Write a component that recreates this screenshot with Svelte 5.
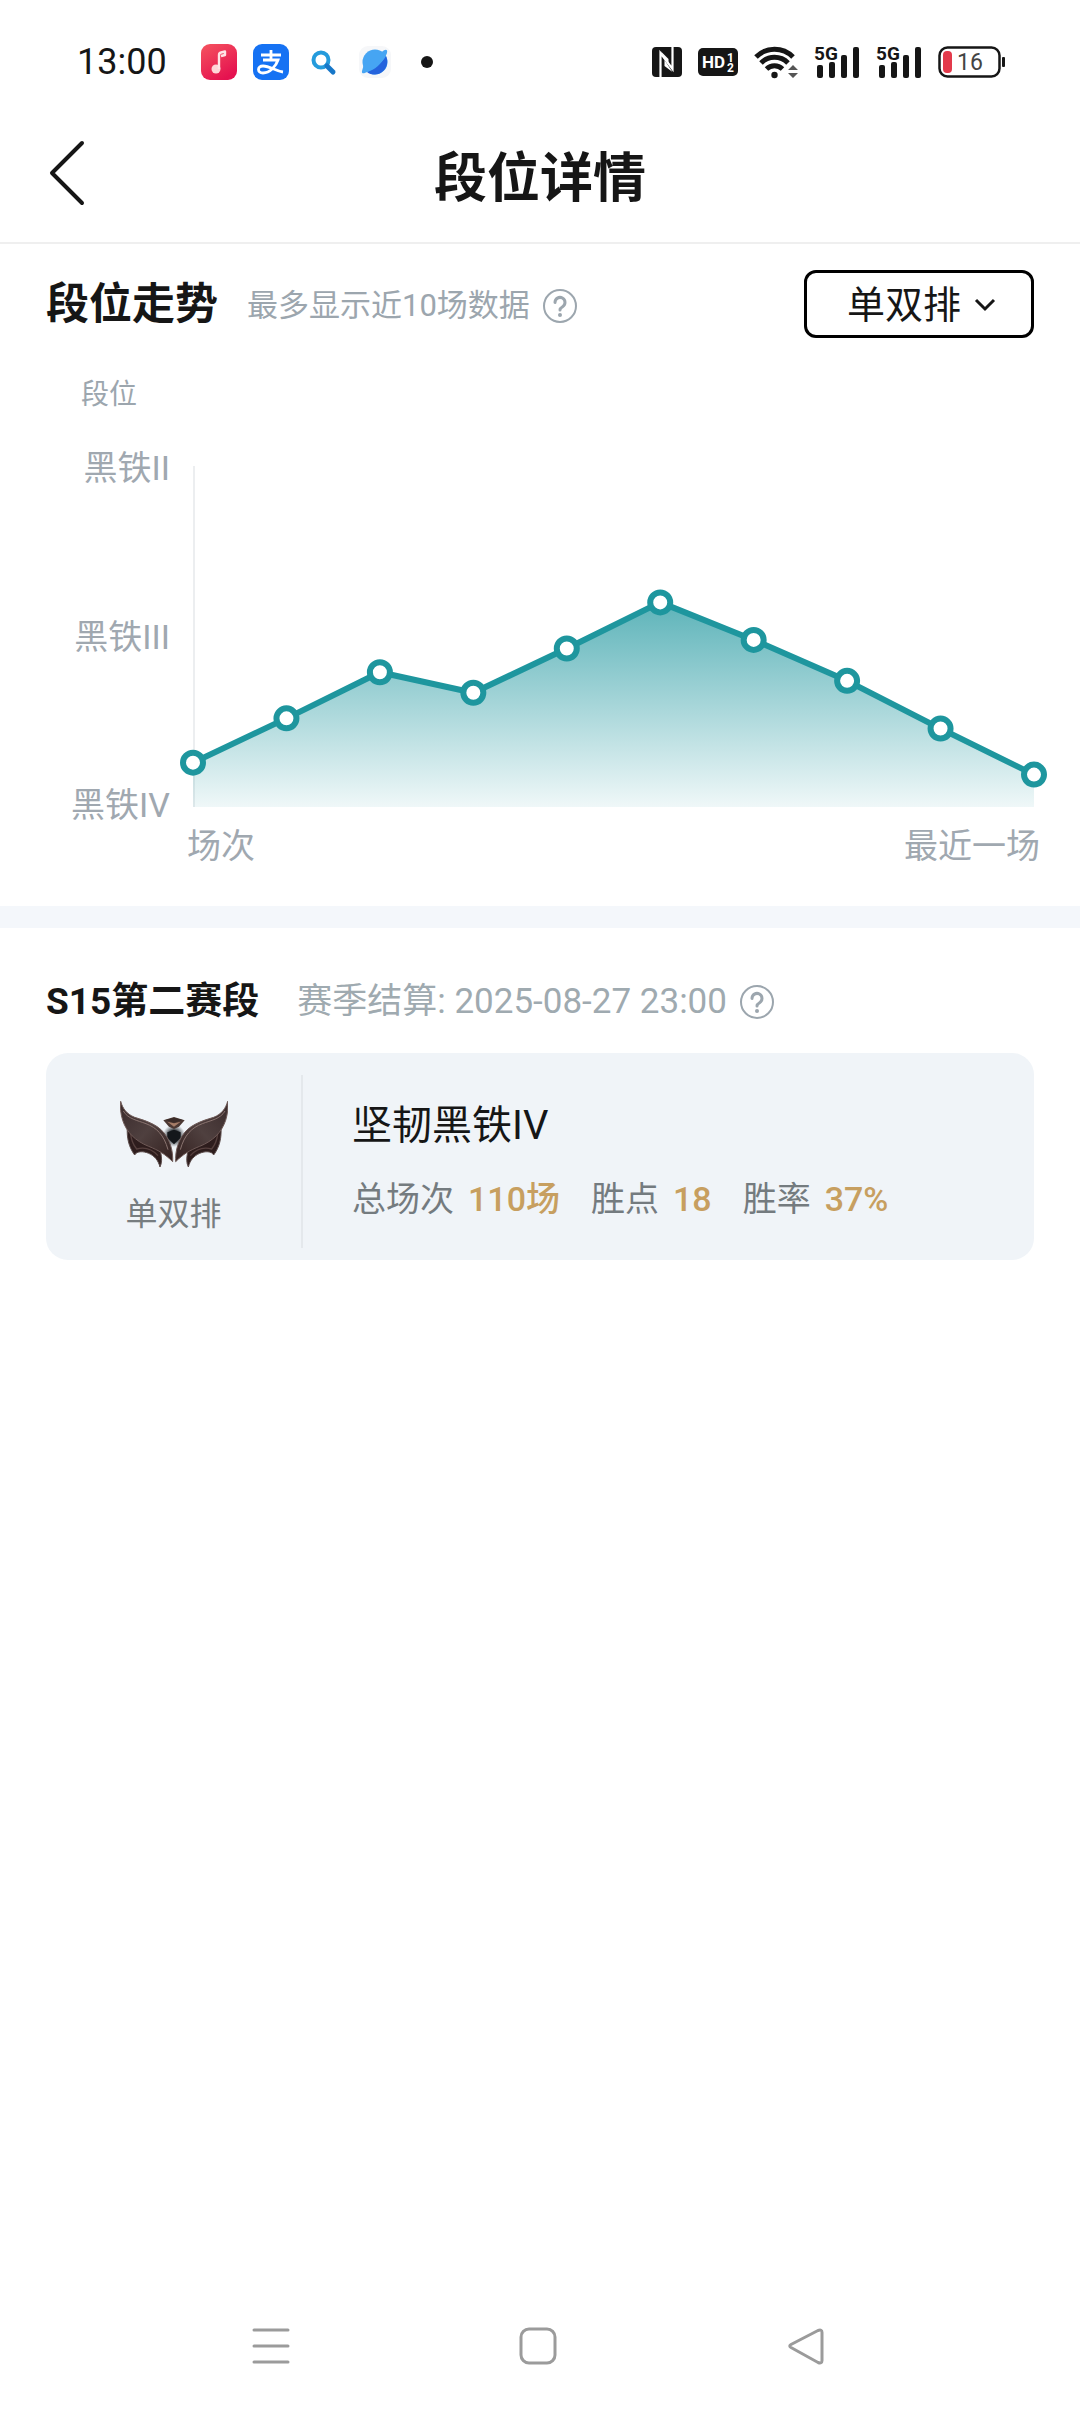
<!-- RankDetail -->

<script lang="ts">
  let mode = 'solo';

  const tiers = ['黑铁II', '黑铁III', '黑铁IV'];

  // 0 = 黑铁IV, 100 = 黑铁III, 200 = 黑铁II
  const matches = [26, 52, 79, 67, 93, 120, 98, 74, 46, 19];

  const plotWidth = 841;
  const plotHeight = 341;

  const points = matches.map((value, i) => ({
    x: (i * plotWidth) / (matches.length - 1),
    y: plotHeight * (1 - value / 200)
  }));

  const line = points.map((p) => `${p.x},${p.y}`).join(' ');
  const area = `0,${plotHeight} ${line} ${plotWidth},${plotHeight}`;

  const stats = [
    { label: '总场次', value: '110场' },
    { label: '胜点', value: '18' },
    { label: '胜率', value: '37%' }
  ];
</script>

{#snippet helpIcon()}
  <svg width="36" height="36" viewBox="0 0 36 36" fill="none" stroke="currentColor" stroke-linecap="round">
    <circle cx="18" cy="18" r="16" stroke-width="2" />
    <path d="M13 14.500a5 5 0 1 1 7.600 4.200c-1.700 1-2.600 1.800-2.600 3.200" stroke-width="3" />
    <circle cx="18" cy="27" r="2" fill="currentColor" stroke="none" />
  </svg>
{/snippet}

{#snippet signal()}
  <svg width="46" height="46" viewBox="0 -6 46 46" fill="#161616">
    <text x="0" y="15" font-size="19" font-weight="700">5G</text>
    <rect x="3" y="20" width="6" height="13" rx="2" />
    <rect x="15" y="17" width="6" height="16" rx="2" />
    <rect x="27" y="10" width="6" height="23" rx="2" />
    <rect x="39" y="2" width="6" height="31" rx="2" />
  </svg>
{/snippet}

<div class="page">
  <div class="status-bar">
    <span class="time">13:00</span>
    <div class="apps">
      <svg width="36" height="36" viewBox="0 0 36 36">
        <defs>
          <linearGradient id="music" x1="0" y1="0" x2="0.6" y2="1">
            <stop offset="0" stop-color="#f5545f" />
            <stop offset="1" stop-color="#e51250" />
          </linearGradient>
        </defs>
        <rect width="36" height="36" rx="9" fill="url(#music)" />
        <circle cx="15" cy="25" r="4.500" fill="#ffd5d8" />
        <path d="M18 25V11q0-2 2-2.500l4-1v3.500l-4 1" fill="none" stroke="#ffe4e6" stroke-width="2.400" stroke-linejoin="round" />
      </svg>
      <svg width="36" height="36" viewBox="0 0 36 36">
        <rect width="36" height="36" rx="9" fill="#1672f3" />
        <path d="M8 11h20M18 6v10M10 16h15c-2 6-8 13-15 13-6 0-6-7 0-7 7 0 12 5 20 6" fill="none" stroke="#fff" stroke-width="2.800" />
      </svg>
      <svg width="36" height="36" viewBox="0 0 36 36" fill="none">
        <circle cx="16" cy="16" r="7.500" stroke="#249bdc" stroke-width="4" />
        <path d="M22 22l6 6" stroke="#1677c8" stroke-width="5" stroke-linecap="round" />
      </svg>
      <svg width="36" height="36" viewBox="0 0 36 36">
        <rect x="2" y="2" width="32" height="32" rx="9" fill="#f6f7f9" />
        <circle cx="18" cy="18" r="12.500" fill="#46a5f3" />
        <path d="M29 12c4 9-2 18-11 18.500-3 0-6-.5-8-2.500 8-2 14-8 19-16z" fill="#2463dd" />
        <path d="M25 8c3-3 6-3 5 1-2 6-8 12-13 15-6 4-13 8-12 3l2-7" fill="#46a5f3" />
      </svg>
      <svg width="12" height="36" viewBox="0 0 12 36"><circle cx="6" cy="18" r="6" fill="#161616" /></svg>
    </div>
    <div class="system">
      <svg width="30" height="30" viewBox="0 0 30 30">
        <rect width="30" height="30" rx="4" fill="#161616" />
        <path d="M8.500 30V6l12 16V0" fill="none" stroke="#fff" stroke-width="2.200" />
        <path d="M8.500 4l8 8v6zM20.500 25l-8-6v-6z" fill="#fff" />
      </svg>
      <svg width="40" height="28" viewBox="0 0 40 28" fill="#fff">
        <rect width="40" height="28" rx="5" fill="#161616" />
        <text x="4" y="20" font-size="17" font-weight="700">HD</text>
        <text x="29" y="14" font-size="12" font-weight="700">1</text>
        <text x="29" y="24" font-size="12" font-weight="700">2</text>
      </svg>
      <svg width="44" height="34" viewBox="0 0 44 34" fill="none" stroke="#161616" stroke-width="5">
        <path d="M2 12a26 26 0 0 1 37 0M7 18a19 19 0 0 1 27 0M12.500 24a11.500 11.500 0 0 1 16 0" />
        <circle cx="20.500" cy="30" r="3.200" fill="#161616" stroke="none" />
        <path d="M34 25l5-5 5 5zM34 28l5 5 5-5z" fill="#555" stroke="none" />
      </svg>
      {@render signal()}
      {@render signal()}
      <svg width="68" height="32" viewBox="0 0 68 32">
        <rect x="1.500" y="1.500" width="60" height="29" rx="8" fill="none" stroke="#161616" stroke-width="2.500" />
        <rect x="64" y="11" width="3" height="10" rx="1" fill="#161616" />
        <rect x="5" y="5" width="9" height="22" rx="4" fill="#e33a4b" />
        <text x="19" y="24" font-size="23" fill="#444">16</text>
      </svg>
    </div>
  </div>

  <header>
    <button class="back" aria-label="返回">
      <svg width="38" height="66" viewBox="0 0 38 66" fill="none" stroke="#161616" stroke-width="4" stroke-linecap="round" stroke-linejoin="round">
        <path d="M34 3L4 33l30 30" />
      </svg>
    </button>
    <h1>段位详情</h1>
  </header>

  <main>
    <section class="trend">
      <div class="trend-head">
        <h2>段位走势</h2>
        <div class="note">
          <span class="hint">最多显示近10场数据</span>
          <button class="help" aria-label="说明">{@render helpIcon()}</button>
        </div>
        <label class="picker">
          <select bind:value={mode} aria-label="模式">
            <option value="solo">单双排</option>
            <option value="flex">灵活组排</option>
          </select>
          <svg width="24" height="16" viewBox="0 0 24 16" fill="none" stroke="#161616" stroke-width="3">
            <path d="M3 4l9 9 9-9" />
          </svg>
        </label>
      </div>

      <p class="axis-title">段位</p>
      <div class="chart">
        <div class="y-labels">
          {#each tiers as tier}
            <span>{tier}</span>
          {/each}
        </div>
        <svg class="plot" viewBox="0 0 {plotWidth} {plotHeight}">
          <defs>
            <linearGradient id="fade" x1="0" y1="0" x2="0" y2="1">
              <stop offset="0" stop-color="#1e969e" stop-opacity="0.72" />
              <stop offset="1" stop-color="#1e969e" stop-opacity="0.07" />
            </linearGradient>
          </defs>
          <line x1="1" y1="0" x2="1" y2={plotHeight} stroke="#eceef0" stroke-width="2" />
          <polygon points={area} fill="url(#fade)" />
          <polyline points={line} fill="none" stroke="#1e969e" stroke-width="6" stroke-linejoin="round" />
          {#each points as p}
            <circle cx={p.x} cy={p.y} r="10" fill="#fff" stroke="#1e969e" stroke-width="6" />
          {/each}
        </svg>
        <div class="x-labels">
          <span>场次</span>
          <span>最近一场</span>
        </div>
      </div>
    </section>

    <section class="season">
      <div class="season-head">
        <h3>S15第二赛段</h3>
        <span class="settle">赛季结算: 2025-08-27 23:00</span>
        <button class="help" aria-label="说明">{@render helpIcon()}</button>
      </div>

      <div class="card">
        <div class="badge">
          <svg width="108" height="66" viewBox="60 62 324 198">
            <defs>
              <linearGradient id="wing" x1="0" y1="0" x2="1" y2="1">
                <stop offset="0" stop-color="#3a2b2c" />
                <stop offset="0.5" stop-color="#4f403f" />
                <stop offset="1" stop-color="#33201f" />
              </linearGradient>
              <radialGradient id="core">
                <stop offset="0" stop-color="#0c0f14" />
                <stop offset="0.5" stop-color="#23272c" stop-opacity="0.85" />
                <stop offset="1" stop-color="#5a6066" stop-opacity="0" />
              </radialGradient>
              <g id="half">
                <path d="M82 140c-2 32 4 60 22 84 6-12 26-12 42-5 18 8 28 20 34 41 6-12 6-26 2-44l-40-40z" fill="#2e1d1d" stroke="#5d4d4c" stroke-width="3" />
                <path d="M92 160c2 24 8 34 18 46 22-6 46 0 64 20" fill="none" stroke="#56403e" stroke-width="4" />
                <path d="M62 63c6 22 18 38 42 48 40 12 76 24 96 58 14 24 19 48 18 75-22-22-42-34-72-46-40-16-66-42-78-78-6-20-8-38-6-57z" fill="url(#wing)" stroke="#6f5a57" stroke-width="3" />
                <path d="M70 92c14 24 42 28 68 38 32 12 54 34 66 78" fill="none" stroke="#8a7470" stroke-width="3" />
              </g>
            </defs>
            <circle cx="222" cy="166" r="34" fill="url(#core)" />
            <path d="M202 156l20-8 20 8v16l-20 20-20-20z" fill="#14171b" />
            <use href="#half" />
            <use href="#half" transform="translate(445 0) scale(-1 1)" />
            <path d="M190 120l32-10 32 10-17 19-15 7-15-7z" fill="#4b3833" />
            <path d="M202 124l20 5 20-5-20 15z" fill="#a57c67" />
            <path d="M196 119l26-7 26 7-26 8z" fill="#3a2b28" />
          </svg>
          <span>单双排</span>
        </div>
        <div class="info">
          <p class="rank">坚韧黑铁IV</p>
          <dl>
            {#each stats as stat}
              <div>
                <dt>{stat.label}</dt>
                <dd>{stat.value}</dd>
              </div>
            {/each}
          </dl>
        </div>
      </div>
    </section>
  </main>

  <nav>
    <button aria-label="最近任务">
      <svg width="38" height="38" viewBox="0 0 38 38" stroke="#9b9b9b" stroke-width="3" stroke-linecap="round">
        <path d="M2 3h34M2 19h34M2 35h34" />
      </svg>
    </button>
    <button aria-label="主屏幕">
      <svg width="38" height="38" viewBox="0 0 38 38" fill="none" stroke="#9b9b9b" stroke-width="3">
        <rect x="2" y="2" width="34" height="34" rx="8" />
      </svg>
    </button>
    <button aria-label="返回上一页">
      <svg width="38" height="38" viewBox="0 0 38 38" fill="none" stroke="#9b9b9b" stroke-width="3">
        <path d="M31 3.500L4 17.500q-2.500 1.500 0 3L31 35.500q4 1.500 4-2v-28q0-3.500-4-2z" />
      </svg>
    </button>
  </nav>
</div>

<style>
  :global(body) {
    background: #ffffff;
  }

  .page {
    min-height: 100vh;
    display: flex;
    flex-direction: column;
    color: #161616;
    font-family: Roboto, "Noto Sans CJK SC", sans-serif;
  }

  .page svg {
    display: block;
    flex: none;
  }

  h1, h2, h3, p, dl, dd {
    margin: 0;
  }

  button {
    padding: 0;
    border: none;
    background: none;
    cursor: pointer;
  }

  .status-bar {
    display: flex;
    align-items: center;
    height: 100px;
    padding: 12px 74px 0 77px;
  }

  .time {
    font-size: 36px;
  }

  .apps {
    display: flex;
    gap: 16px;
    margin-left: 34px;
  }

  .apps svg:last-child {
    margin-left: 12px;
  }

  .system {
    display: flex;
    align-items: center;
    gap: 16px;
    margin-left: auto;
  }

  header {
    display: grid;
    grid-template-columns: 1fr auto 1fr;
    align-items: center;
    height: 124px;
    padding: 0 48px 6px;
    border-bottom: 2px solid #efefef;
  }

  .back {
    justify-self: start;
    margin-bottom: 2px;
  }

  h1 {
    font-size: 53px;
    font-weight: 700;
  }

  .trend {
    padding: 26px 46px 40px;
  }

  .trend-head {
    display: flex;
    align-items: center;
  }

  h2 {
    font-size: 43px;
    line-height: 50px;
    font-weight: 700;
  }

  .note {
    display: flex;
    align-items: center;
    margin-left: 29px;
    padding-top: 4px;
  }

  .hint {
    font-size: 31px;
    line-height: 40px;
    color: #9ca6ae;
  }

  .help {
    margin-left: 12px;
    color: #9ca6ae;
  }

  .picker {
    display: flex;
    align-items: center;
    margin-left: auto;
    height: 62px;
    padding: 0 34px 0 40px;
    border: 3px solid #000000;
    border-radius: 12px;
  }

  select {
    appearance: none;
    padding: 2px 0 0;
    margin-right: 12px;
    width: 114px;
    border: none;
    background: none;
    color: #161616;
    font-family: inherit;
    font-size: 38px;
    line-height: 56px;
  }

  .axis-title {
    margin-top: 40px;
    padding-left: 35px;
    font-size: 28px;
    line-height: 34px;
    color: #9ca6ae;
  }

  .chart {
    display: grid;
    grid-template-columns: 124px 1fr;
    column-gap: 23px;
    margin-top: 54px;
    font-size: 34px;
    color: #a0a8b0;
  }

  .y-labels {
    display: flex;
    flex-direction: column;
    justify-content: space-between;
    margin: -15px 0;
    line-height: 34px;
    text-align: right;
  }

  .plot {
    width: 100%;
    overflow: visible;
  }

  .x-labels {
    grid-column: 2;
    display: flex;
    justify-content: space-between;
    margin: 19px -6px 0;
    line-height: 40px;
  }

  .season {
    padding: 49px 46px;
    border-top: 22px solid #f4f7fb;
  }

  .season-head {
    display: flex;
    align-items: center;
  }

  h3 {
    font-size: 37px;
    line-height: 50px;
    font-weight: 700;
  }

  .settle {
    margin-left: 38px;
    font-size: 35px;
    line-height: 50px;
    color: #9faab0;
  }

  .card {
    display: flex;
    margin-top: 26px;
    padding: 22px 0 12px;
    border-radius: 22px;
    background: #f0f4f8;
  }

  .badge {
    display: flex;
    flex-direction: column;
    align-items: center;
    gap: 27px;
    width: 255px;
    padding: 26px 0 14px;
    border-right: 2px solid #e4e8ec;
    font-size: 32px;
    line-height: 40px;
    color: #777d80;
  }

  .info {
    display: flex;
    flex-direction: column;
    gap: 28px;
    padding: 26px 0 0 49px;
  }

  .rank {
    font-size: 40px;
    line-height: 50px;
  }

  dl {
    display: flex;
    gap: 31px;
    font-size: 34px;
    line-height: 40px;
  }

  dl div {
    display: flex;
    gap: 14px;
  }

  dt {
    color: #747b7f;
  }

  dd {
    color: #c79f60;
    font-weight: 500;
  }

  nav {
    display: flex;
    justify-content: space-around;
    align-items: center;
    height: 132px;
    margin-top: auto;
    padding: 0 140px 0 137px;
  }
</style>
